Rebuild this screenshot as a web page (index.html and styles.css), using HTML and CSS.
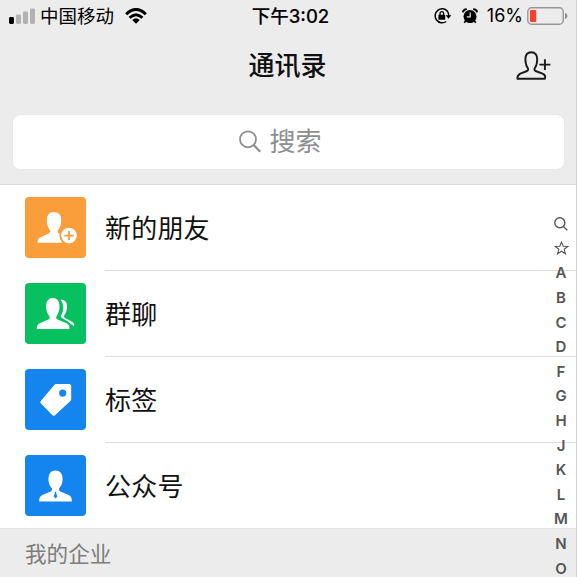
FILE: index.html
```html
<!DOCTYPE html>
<html lang="zh-CN">
<head>
<meta charset="utf-8">
<title>通讯录</title>
<link rel="stylesheet" href="styles.css">
</head>
<body>
<div class="app">
  <header class="top">
    <div class="status">
      <div class="status-left">
        <svg class="signal" width="26" height="16" viewBox="0 0 26 16"><rect x="0" y="9" width="5" height="7" rx="1.4"/><g fill="#b2b2b2"><rect x="7" y="6.5" width="5" height="9.5" rx="1.4"/><rect x="14" y="3.5" width="5" height="12.5" rx="1.4"/><rect x="21" y="0.5" width="5" height="15.5" rx="1.4"/></g></svg>
        <span class="carrier">中国移动</span>
        <svg class="wifi" width="22" height="16" viewBox="0 0 22 16"><g fill="none" stroke="#000" stroke-width="2.9"><path d="M1.2 6.2Q11-3.3 20.8 6.2"/><path d="M4.6 9.8Q11 3.6 17.4 9.8"/></g><path d="M7.2 12Q11 8.7 14.8 12L11 15.7Z"/></svg>
      </div>
      <div class="clock">下午3:02</div>
      <div class="status-right">
        <svg width="18" height="16" viewBox="0 0 18 16"><path d="M13.5 3.3A7 7 0 1 0 12.2 13.5M13.3 3.1A7 7 0 0 1 14.7 8" fill="none" stroke="#000" stroke-width="1.5"/><path d="M11.7 7.3h5.6l-2.8 3.5z"/><rect x="4.4" y="6.8" width="6.8" height="5" rx=".6"/><path d="M6 7.4V5.5a1.8 1.8 0 0 1 3.6 0v1.9" fill="none" stroke="#000" stroke-width="1.3"/></svg>
        <svg class="alarm" width="16" height="16" viewBox="0 0 16 16"><circle cx="8" cy="8.6" r="6.5"/><path d="M.9 4.3Q1.2 1.2 4.8 1.1M11.2 1.1Q14.8 1.2 15.1 4.3" fill="none" stroke="#000" stroke-width="1.9"/><path d="M3.5 13l-1.2 1.8M12.5 13l1.2 1.8" stroke="#000" stroke-width="1.7"/><path d="M8.2 4.6v4.2H4.8" fill="none" stroke="#ececec" stroke-width="1.2"/></svg>
        <span class="percent">16%</span>
        <svg class="battery" width="42" height="18" viewBox="0 0 42 18"><rect x=".8" y=".8" width="35.4" height="16.4" rx="3.8" fill="none" stroke="#969696" stroke-width="1.4"/><rect x="3" y="3" width="6.2" height="12" rx="1" fill="#fc3d32"/><path d="M38 5.8q2.6 1 2.6 3.2T38 12.2z" fill="#969696"/></svg>
      </div>
    </div>
    <div class="nav">
      <h1>通讯录</h1>
      <svg class="add" width="36" height="30" viewBox="0 0 36 30" fill="none" stroke="#1a1a1a" stroke-width="1.9" stroke-linejoin="round"><path d="M1.4 27.8H28.8Q30.2 24.2 26.5 22.7L19.5 20Q17.7 19 19 16.8C20.5 14.8 21.2 12 21.2 8.3C21.2 3.8 19.2 1.2 15.3 1.2S9.4 3.8 9.4 8.3C9.4 12 10.1 14.8 11.6 16.8Q12.9 19 11.1 20L4.3 22.7Q1.2 24.2 1.4 27.8Z"/><path d="M23.4 13.6H34.4M28.9 8.2V19"/></svg>
    </div>
    <div class="search">
      <svg width="22" height="23" viewBox="0 0 22 23" fill="none" stroke="#8e8e90" stroke-width="1.8"><circle cx="9" cy="9.3" r="8"/><path d="M14.6 15L21.2 21.7" stroke-width="2.2"/></svg>
      <span>搜索</span>
    </div>
  </header>

  <main class="list">
    <div class="row">
      <svg class="icon orange" viewBox="0 0 61 61"><path d="M12.5 45.8Q12.5 41.6 15.5 40.2L23.8 36.6Q25.6 35.6 25.4 33.6Q21.8 29.8 21.8 23.2Q21.8 15 29 15T36.2 23.2Q36.2 29.8 32.6 33.6Q32.4 35.6 34.2 36.6L43 41V45.8Z"/><circle class="gap" cx="44" cy="38.6" r="9.6"/><circle cx="44" cy="38.6" r="7.8"/><path class="plus" d="M39.3 38.6H48.7M44 33.9V43.3"/></svg>
      <div class="label">新的朋友</div>
    </div>
    <div class="row">
      <svg class="icon green" viewBox="0 0 61 61"><path d="M35.4 16.6C40.5 16.7 42.5 20.4 42 25.2Q41.6 29.2 39.2 32.4Q38.4 34 40 35L47 38.8Q50.2 40.7 49 43.2C46 41.6 44.2 39 40.4 37L36.5 34.8Q35 33.6 36.4 31.6C38.8 27.6 39.6 21.6 35.4 16.6Z"/><path d="M11.8 46Q11.5 41.6 14.7 40.2L22.7 36.8Q25.4 35.6 24.5 33.4Q21.1 29.6 21.1 23.6Q21.1 15 27.8 15T34.5 23.6Q34.5 29.6 31.4 33.4Q30.5 35.6 33.2 36.8L41.6 40.2Q44.8 41.8 44.5 46Z"/></svg>
      <div class="label">群聊</div>
    </div>
    <div class="row">
      <svg class="icon blue" viewBox="0 0 61 61"><path fill-rule="evenodd" d="M31.3 15.1H44.2Q46.2 15.1 46.2 17.1V30.2Q46.2 31.2 45.4 32L30 46.2Q28.6 47.4 27.2 46.1L15.7 34.3Q14.6 33 16 31.7L29.3 15.9Q30.1 15.1 31.3 15.1ZM37.7 20.5A3.6 3.6 0 1 0 37.7 27.7A3.6 3.6 0 1 0 37.7 20.5Z"/></svg>
      <div class="label">标签</div>
    </div>
    <div class="row">
      <svg class="icon blue" viewBox="0 0 61 61"><path d="M14.2 46.6Q13.8 41.4 17.4 39.9L25 36.8Q27.8 35.6 26.8 33.2Q23.4 29.7 23.4 24Q23.4 15.5 30.5 15.5T37.6 24Q37.6 29.7 34.2 33.2Q33.2 35.6 36 36.8L43.6 39.9Q47.2 41.4 46.8 46.6Z"/><path class="tie" d="M29.7 36.8h1.6l-.1 1.6 1.1 3.2-1.8 1.9-1.8-1.9 1.1-3.2z"/></svg>
      <div class="label">公众号</div>
    </div>
    <div class="section">我的企业</div>
  </main>

  <nav class="index">
    <span><svg width="14" height="14" viewBox="0 0 14 14" fill="none" stroke="#555" stroke-width="1.4"><circle cx="5.8" cy="5.8" r="5"/><path d="M9.4 9.4L13.4 13.2"/></svg></span>
    <span><svg width="15" height="14" viewBox="0 0 15 14" fill="none" stroke="#555" stroke-width="1.1"><path d="M7.5 1.1L9.2 5.2 13.7 5.5 10.2 8.3 11.4 12.7 7.5 10.2 3.6 12.7 4.8 8.3 1.3 5.5 5.8 5.2Z"/></svg></span>
    <span>A</span><span>B</span><span>C</span><span>D</span><span>F</span><span>G</span><span>H</span><span>J</span><span>K</span><span>L</span><span>M</span><span>N</span><span>O</span>
  </nav>
</div>
</body>
</html>
```
FILE: styles.css
```css
* { box-sizing: border-box; }
body {
  margin: 0;
  overflow: hidden;
  font-family: Inter, "Noto Sans CJK SC", sans-serif;
  color: #111;
}
svg { display: block; flex: none; }
.app {
  position: relative;
  width: 577px;
  height: 577px;
  overflow: hidden;
  background: #fff;
  border-right: 1px solid #d2d2d2;
}
.top {
  height: 185px;
  background: #ececec;
  border-bottom: 1px solid #d9d9d9;
}
.status {
  display: grid;
  grid-template-columns: 1fr auto 1fr;
  align-items: center;
  height: 32px;
  padding: 0 7px 0 9px;
  color: #000;
  font-size: 18px;
  line-height: 32px;
}
.status-left, .status-right { display: flex; align-items: center; }
.status-right { justify-content: flex-end; }
.carrier { margin-left: 5px; font-size: 18.5px; }
.wifi { margin-left: 11px; }
.clock { margin-left: 3px; font-weight: 500; font-size: 18.5px; -webkit-text-stroke: .1px; }
.alarm { margin-left: 10px; }
.percent { margin-left: 9px; }
.battery { margin-left: 4px; }
.nav {
  display: grid;
  grid-template-columns: 1fr auto 1fr;
  align-items: center;
  height: 66px;
  padding-top: 2px;
}
h1 {
  grid-column: 2;
  margin: 0 1px 0 0;
  font-size: 26px;
  line-height: 36px;
  font-weight: 500;
}
.add { justify-self: end; margin-right: 24px; }
.search {
  display: flex;
  align-items: center;
  justify-content: center;
  gap: 8px;
  height: 54px;
  margin: 17px 12px 0 13px;
  padding-right: 16px;
  border-radius: 7px;
  background: #fff;
  box-shadow: 0 0 1px #d5d5d5;
  color: #8e8e90;
  font-size: 26px;
  line-height: 52px;
}
.search svg { margin-top: -2px; }
.row {
  display: flex;
  gap: 19px;
  height: 86px;
  padding: 12px 0 0 25px;
}
.icon { width: 61px; height: 61px; border-radius: 4px; fill: #fff; }
.orange { background: #fa9d3b; }
.green { background: #07c160; }
.blue { background: #1485ee; }
.gap { fill: #fa9d3b; }
.plus { stroke: #fa9d3b; stroke-width: 1.8; }
.tie { fill: #1485ee; }
.label {
  flex: 1;
  height: 74px;
  border-bottom: 1px solid #dedede;
  font-size: 26px;
  letter-spacing: .2px;
  line-height: 63px;
}
.row:nth-child(4) { height: 85px; }
.row:nth-child(4) .label { border: 0; }
.section {
  height: 49px;
  padding-left: 25px;
  background: #ececec;
  border-top: 1px solid #e4e4e4;
  color: #7d7d7d;
  font-size: 21.6px;
  line-height: 50px;
}
.index {
  position: absolute;
  top: 211.4px;
  right: 2px;
  width: 26px;
  color: #555;
  font-size: 15px;
  font-weight: 600;
}
.index span {
  display: flex;
  align-items: center;
  justify-content: center;
  height: 24.6px;
}
```
